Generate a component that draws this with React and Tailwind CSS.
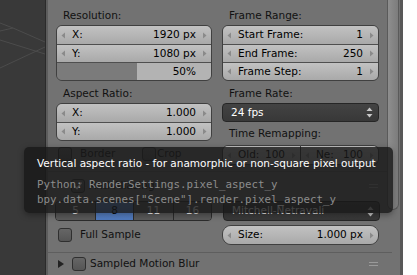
import React from 'react'

const ArrowL = () => (
    <svg width="5" height="7" viewBox="0 0 5 7" className="shrink-0">
        <path d="M4 0.5 L0.5 3.5 L4 6.5 Z" fill="#8a8a8a" />
    </svg>
)

const ArrowR = () => (
    <svg width="5" height="7" viewBox="0 0 5 7" className="shrink-0">
        <path d="M1 0.5 L4.5 3.5 L1 6.5 Z" fill="#8a8a8a" />
    </svg>
)

const UpDown = () => (
    <svg width="7" height="11" viewBox="0 0 7 11" className="shrink-0">
        <path d="M3.5 0.5 L6.5 4 L0.5 4 Z" fill="#c8c8c8" />
        <path d="M3.5 10.5 L6.5 7 L0.5 7 Z" fill="#c8c8c8" />
    </svg>
)

const NumRow = ({ label, value, first }) => (
    <div
        className={`h-[18px] flex items-center pl-[4px] pr-[4px] bg-gradient-to-b from-[#c2c2c2] to-[#a9a9a9] ${first ? '' : 'border-t border-[#4f4f4f]'}`}
    >
        <ArrowL />
        <span className="ml-[6px] flex-1 text-black">{label}</span>
        <span className="text-black">{value}</span>
        <span className="ml-[6px]"><ArrowR /></span>
    </div>
)

const Box = ({ children, className = '' }) => (
    <div className={`rounded-[6px] border border-[#404040] overflow-hidden flex flex-col ${className}`}>
        {children}
    </div>
)

const Label = ({ children, className = '' }) => (
    <div className={`h-[16px] leading-[16px] pl-[7px] text-[#111] ${className}`}>{children}</div>
)

const Check = ({ checked }) => (
    <div className="w-[14px] h-[14px] rounded-[3px] border border-[#2f2f2f] bg-gradient-to-b from-[#666] to-[#555] flex items-center justify-center shrink-0">
        {checked && (
            <svg width="10" height="10" viewBox="0 0 10 10">
                <path d="M1.5 5 L4 7.5 L8.5 1.5" stroke="#fff" strokeWidth="1.6" fill="none" />
            </svg>
        )}
    </div>
)

const Dropdown = ({ children, className = '' }) => (
    <div className={`rounded-[4px] border border-[#262626] bg-gradient-to-b from-[#434343] to-[#383838] flex items-center pl-[8px] pr-[5px] text-white ${className}`}>
        <span className="flex-1">{children}</span>
        <UpDown />
    </div>
)

const Grip = () => (
    <div className="flex flex-col gap-[2px] w-[9px]">
        <div className="h-px bg-[#9a9a9a]" />
        <div className="h-px bg-[#9a9a9a]" />
    </div>
)

export default function App() {
    return (
        <div className="w-[417px] h-[275px] flex overflow-hidden relative font-['DejaVu_Sans',sans-serif] text-[10.5px]">
            {/* 3d viewport edge */}
            <div className="w-[45px] h-full bg-[#393939] shrink-0">
                <svg width="45" height="275" viewBox="0 0 45 275">
                    <g stroke="#4c4c4c" strokeWidth="1" fill="none">
                        <path d="M0 23 L13 28 L45 42" />
                        <path d="M13 28 L0 31" />
                        <path d="M0 40 L45 54" />
                        <path d="M45 47 L0 68" />
                    </g>
                </svg>
            </div>
            <div className="w-[3px] h-full border-l border-[#2a2a2a] bg-[#5c5c5c] shrink-0" />

            {/* properties panel */}
            <div className="w-[352px] h-full bg-[#727272] relative shrink-0 flex flex-col">
                <div className="flex gap-[10px] pl-[8px] pt-[7px]">
                    <div className="w-[156px] flex flex-col">
                        <Label>Resolution:</Label>
                        <Box className="mt-[2px]">
                            <NumRow first label="X:" value="1920 px" />
                            <NumRow label="Y:" value="1080 px" />
                            <div className="h-[18px] border-t border-[#4f4f4f] flex items-center justify-end pr-[15px] text-black bg-[linear-gradient(to_right,#7b7b7b_52%,#b3b3b3_52%)]">
                                50%
                            </div>
                        </Box>
                        <Label className="mt-[4px]">Aspect Ratio:</Label>
                        <Box className="mt-[2px]">
                            <NumRow first label="X:" value="1.000" />
                            <NumRow label="Y:" value="1.000" />
                        </Box>
                        <div className="mt-[3px] h-[19px] flex items-center pl-[2px] text-[#111]">
                            <Check />
                            <span className="ml-[8px] w-[62px]">Border</span>
                            <Check />
                            <span className="ml-[1px]">Crop</span>
                        </div>
                    </div>
                    <div className="w-[157px] flex flex-col">
                        <Label>Frame Range:</Label>
                        <Box className="mt-[2px]">
                            <NumRow first label="Start Frame:" value="1" />
                            <NumRow label="End Frame:" value="250" />
                            <NumRow label="Frame Step:" value="1" />
                        </Box>
                        <Label className="mt-[4px]">Frame Rate:</Label>
                        <Dropdown className="mt-[2px] h-[19px]">24 fps</Dropdown>
                        <Label className="mt-[3px]">Time Remapping:</Label>
                        <div className="mt-[4px] flex">
                            <Box className="w-[79px] rounded-r-none">
                                <NumRow first label="Old:" value="100" />
                            </Box>
                            <Box className="w-[78px] rounded-l-none border-l-0">
                                <NumRow first label="Ne:" value="100" />
                            </Box>
                        </div>
                    </div>
                </div>

                {/* anti-aliasing header */}
                <div className="mt-[6px] mr-[8px] border-t border-[#5e5e5e] h-[28px] flex items-center pl-[9px] pr-[14px] text-[#111]">
                    <svg width="7" height="7" viewBox="0 0 7 7"><path d="M0 1 L7 1 L3.5 6 Z" fill="#222" /></svg>
                    <span className="ml-[7px]"><Check checked /></span>
                    <span className="ml-[4px] flex-1">Anti-Aliasing</span>
                    <Grip />
                </div>

                <div className="flex gap-[10px] pl-[7px] mt-[2px]">
                    <div className="w-[157px] h-[20px] flex rounded-[4px] border border-[#2c2c2c] overflow-hidden text-white">
                        <div className="w-[40px] flex items-center justify-center bg-[#5a5a5a] border-r border-[#2c2c2c]">5</div>
                        <div className="w-[38px] flex items-center justify-center bg-gradient-to-b from-[#6590d4] to-[#4f79bd] border-r border-[#2c2c2c] text-black">8</div>
                        <div className="w-[40px] flex items-center justify-center bg-[#5a5a5a] border-r border-[#2c2c2c]">11</div>
                        <div className="flex-1 flex items-center justify-center bg-[#5a5a5a]">16</div>
                    </div>
                    <Dropdown className="w-[157px] h-[20px] ml-[1px]">Mitchell-Netravali</Dropdown>
                </div>

                <div className="flex gap-[10px] pl-[8px] mt-[4px] items-center">
                    <div className="w-[156px] flex items-center pl-[2px] text-[#111]">
                        <Check />
                        <span className="ml-[8px]">Full Sample</span>
                    </div>
                    <Box className="w-[157px] rounded-[9px]">
                        <NumRow first label="Size:" value="1.000 px" />
                    </Box>
                </div>

                {/* sampled motion blur header */}
                <div className="mt-[7px] mr-[8px] border-t border-[#5e5e5e] flex-1 flex items-center pl-[10px] pr-[14px] text-[#111] text-[10.5px]">
                    <svg width="6" height="8" viewBox="0 0 6 8"><path d="M0 0 L6 4 L0 8 Z" fill="#222" /></svg>
                    <span className="ml-[8px]"><Check /></span>
                    <span className="ml-[4px] flex-1">Sampled Motion Blur</span>
                    <Grip />
                </div>

                {/* scrollbar overlay */}
                <div className="absolute right-[1px] top-0 w-[12px] h-[210px] rounded-b-[6px] border border-t-0 border-[#5a5a5a] bg-gradient-to-r from-[#8e8e8e] to-[#7c7c7c]" />
            </div>

            <div className="w-[3px] h-full bg-[#585858] shrink-0" />
            <div className="flex-1 h-full bg-white" />

            {/* tooltip */}
            <div className="absolute left-[24px] top-[147px] w-[369px] h-[66px] rounded-[5px] bg-[rgba(24,24,24,0.82)] shadow-[0_2px_6px_rgba(0,0,0,0.35)] pl-[13px] pt-[9px]">
                <div className="h-[15px] leading-[15px] text-white">Vertical aspect ratio - for anamorphic or non-square pixel output</div>
                <div className="mt-[6px] font-['DejaVu_Sans_Mono',monospace] text-[10.8px] leading-[15px] text-[#8c8c8c]">
                    <div>Python: RenderSettings.pixel_aspect_y</div>
                    <div>bpy.data.scenes["Scene"].render.pixel_aspect_y</div>
                </div>
            </div>
        </div>
    )
}
